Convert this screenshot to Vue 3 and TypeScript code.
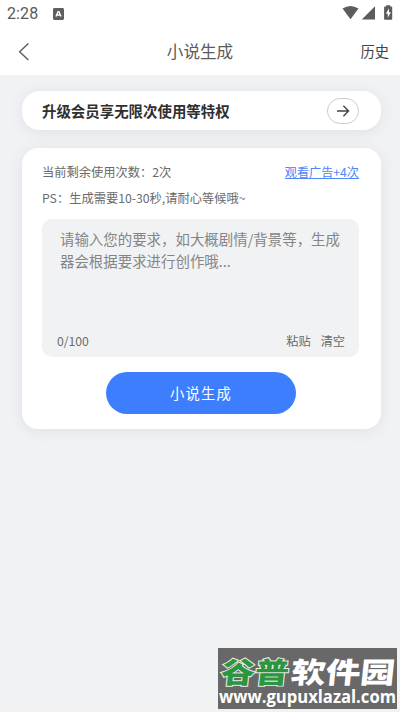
<script setup lang="ts">
import { ref, computed } from 'vue'

const prompt = ref('')
const limit = 100
const remaining = ref(2)
const count = computed(() => `${prompt.value.length}/${limit}`)

function clearPrompt(): void {
  prompt.value = ''
}

async function pastePrompt(): Promise<void> {
  prompt.value = (await navigator.clipboard.readText()).slice(0, limit)
}
</script>

<template>
  <div class="screen">
    <div class="status">
      <span class="time">2:28</span>
      <svg class="app-mark" viewBox="0 0 11 12">
        <rect width="11" height="12" rx="1.4" fill="#5f5f5f" />
        <path d="M3 8.6 5.1 3.6h.8L8 8.6M3.8 7h3.4" fill="none" stroke="#fff" stroke-width="1.4" />
      </svg>
      <svg class="signals" viewBox="0 0 51 16">
        <path d="M0.5 3.6Q8.5-1.5 16.5 3.6L8.5 14.2Z" fill="#5c5c5c" />
        <path d="M33 1.2V14.5H19.8Z" fill="#5c5c5c" />
        <path d="M44.2 0.2h4v1.3h1.2q.8 0 .8.8v11.6q0 .8-.8.8h-6.5q-.8 0-.8-.8V2.3q0-.8.8-.8h1.3Z" fill="#5c5c5c" />
        <path d="M47 3.3 43.9 8.7h1.9V12.8L48.9 7.2H47Z" fill="#fff" />
      </svg>
    </div>

    <header class="nav">
      <svg class="back" viewBox="0 0 12 20">
        <path d="M10.4 1.5 1.6 9.8 10.4 18.1" fill="none" stroke="#5c5c5c" stroke-width="1.4" />
      </svg>
      <h1 class="title">小说生成</h1>
      <span class="history">历史</span>
    </header>

    <main class="content">
      <section class="promo">
        <span class="promo-text">升级会员享无限次使用等特权</span>
        <span class="promo-arrow">
          <svg viewBox="0 0 14 12">
            <path d="M1 6H12.4M7.4 0.8 12.5 6 7.4 11.2" fill="none" stroke="#444" stroke-width="1.4" />
          </svg>
        </span>
      </section>

      <section class="card">
        <div class="quota">
          <span>当前剩余使用次数：{{ remaining }}次</span>
          <a class="ad">观看广告+4次</a>
        </div>
        <p class="hint">PS：生成需要10-30秒,请耐心等候哦~</p>
        <div class="editor">
          <textarea
            v-model="prompt"
            class="input"
            :maxlength="limit"
            placeholder="请输入您的要求，如大概剧情/背景等，生成器会根据要求进行创作哦..."
          ></textarea>
          <div class="tools">
            <span class="count">{{ count }}</span>
            <span class="tool" @click="pastePrompt">粘贴</span>
            <span class="tool" @click="clearPrompt">清空</span>
          </div>
        </div>
        <button class="generate">小说生成</button>
      </section>
    </main>

    <div class="watermark">
      <svg viewBox="0 0 179 61">
        <g class="brand" transform="translate(0 35) skewX(-6) scale(1 .93)">
          <text class="green" x="2" y="0" textLength="68" lengthAdjust="spacingAndGlyphs">谷普</text>
          <text class="white" x="72" y="0" textLength="104" lengthAdjust="spacingAndGlyphs">软件园</text>
        </g>
        <text class="site" x="1" y="54.5" textLength="177" lengthAdjust="spacingAndGlyphs">www.gupuxlazal.com</text>
      </svg>
    </div>
  </div>
</template>

<style>
body {
  background: #f1f2f4;
}
</style>

<style scoped>
.screen {
  position: relative;
  height: 712px;
  overflow: hidden;
  background: #f1f2f4;
  font-family: "Noto Sans CJK SC", sans-serif;
  color: #6a6a6a;
}
.status {
  display: flex;
  align-items: center;
  height: 28px;
  padding: 0 7px;
  background: #fff;
}
.time {
  width: 46px;
  font: 16px/28px Roboto, sans-serif;
  letter-spacing: 0.1px;
  color: #5a5a5a;
}
.app-mark {
  width: 11px;
  height: 12px;
}
.signals {
  width: 51px;
  height: 16px;
  margin-left: auto;
  margin-top: -2px;
}
.nav {
  display: grid;
  grid-template-columns: 60px 1fr 60px;
  align-items: center;
  height: 47px;
  box-sizing: border-box;
  padding: 0 11px 2px 18px;
  background: #fff;
}
.back {
  width: 12px;
  height: 20px;
  margin-top: 2px;
}
.title {
  margin: 0 0 0 -7px;
  text-align: center;
  font-size: 16.6px;
  font-weight: 400;
  line-height: 24px;
  color: #5c5c5c;
}
.history {
  text-align: right;
  font-size: 14.3px;
  line-height: 22px;
  color: #444;
}
.content {
  display: flex;
  flex-direction: column;
  gap: 18px;
  padding: 16px 19px 0 22px;
}
.promo,
.card {
  background: #fff;
  box-shadow: 0 2px 14px rgba(100, 105, 150, 0.12);
}
.promo {
  display: flex;
  align-items: center;
  justify-content: space-between;
  height: 39px;
  box-sizing: border-box;
  padding: 0 22px 0 20px;
  border-radius: 18px;
}
.promo-text {
  font-size: 14.45px;
  font-weight: 700;
  color: #2f2f2f;
}
.promo-arrow {
  display: flex;
  align-items: center;
  justify-content: center;
  width: 32px;
  height: 26px;
  box-sizing: border-box;
  border: 1px solid #ccc;
  border-radius: 13px;
}
.promo-arrow svg {
  width: 14px;
  height: 12px;
}
.card {
  display: flex;
  flex-direction: column;
  height: 281px;
  box-sizing: border-box;
  padding: 14px 22px 0 20px;
  border-radius: 16px;
}
.quota {
  display: flex;
  justify-content: space-between;
  font-size: 12.25px;
  line-height: 20px;
}
.ad {
  font-size: 12.15px;
  color: #4c86f8;
  text-decoration: underline;
}
.hint {
  margin: 6px 0 11px;
  font-size: 12.25px;
  line-height: 20px;
}
.editor {
  display: flex;
  flex-direction: column;
  height: 138px;
  box-sizing: border-box;
  padding: 9px 14px 6px 15px;
  border-radius: 10px;
  background: #f1f2f4;
}
.input {
  flex: 1;
  margin: 0 -2px 0 3px;
  padding: 0;
  border: 0;
  outline: 0;
  resize: none;
  overflow: hidden;
  background: transparent;
  font-family: inherit;
  font-size: 14.45px;
  line-height: 22px;
  color: #444;
}
.input::placeholder {
  color: #858585;
}
.tools {
  display: flex;
  gap: 10px;
  font-size: 12.2px;
  line-height: 20px;
}
.count {
  flex: 1;
}
.generate {
  width: 190px;
  height: 42px;
  margin: 15px 0 0 64px;
  padding: 0 0 2px;
  border: 0;
  border-radius: 21px;
  background: #3d7eff;
  color: #fff;
  font-family: inherit;
  font-size: 14.3px;
  letter-spacing: 1.2px;
}
.watermark {
  position: absolute;
  left: 218px;
  top: 648px;
  width: 179px;
  height: 61px;
  background: #686868;
}
.watermark svg {
  display: block;
  width: 179px;
  height: 61px;
  overflow: visible;
}
.brand {
  font-size: 31px;
  font-weight: 900;
}
.green {
  fill: #2c9540;
  stroke: #e8f0e8;
  stroke-width: 2px;
  paint-order: stroke;
}
.white {
  fill: #fff;
}
.site {
  font-family: "Open Sans", "Noto Sans", sans-serif;
  font-size: 17px;
  font-weight: 700;
  fill: #fff;
}
</style>
